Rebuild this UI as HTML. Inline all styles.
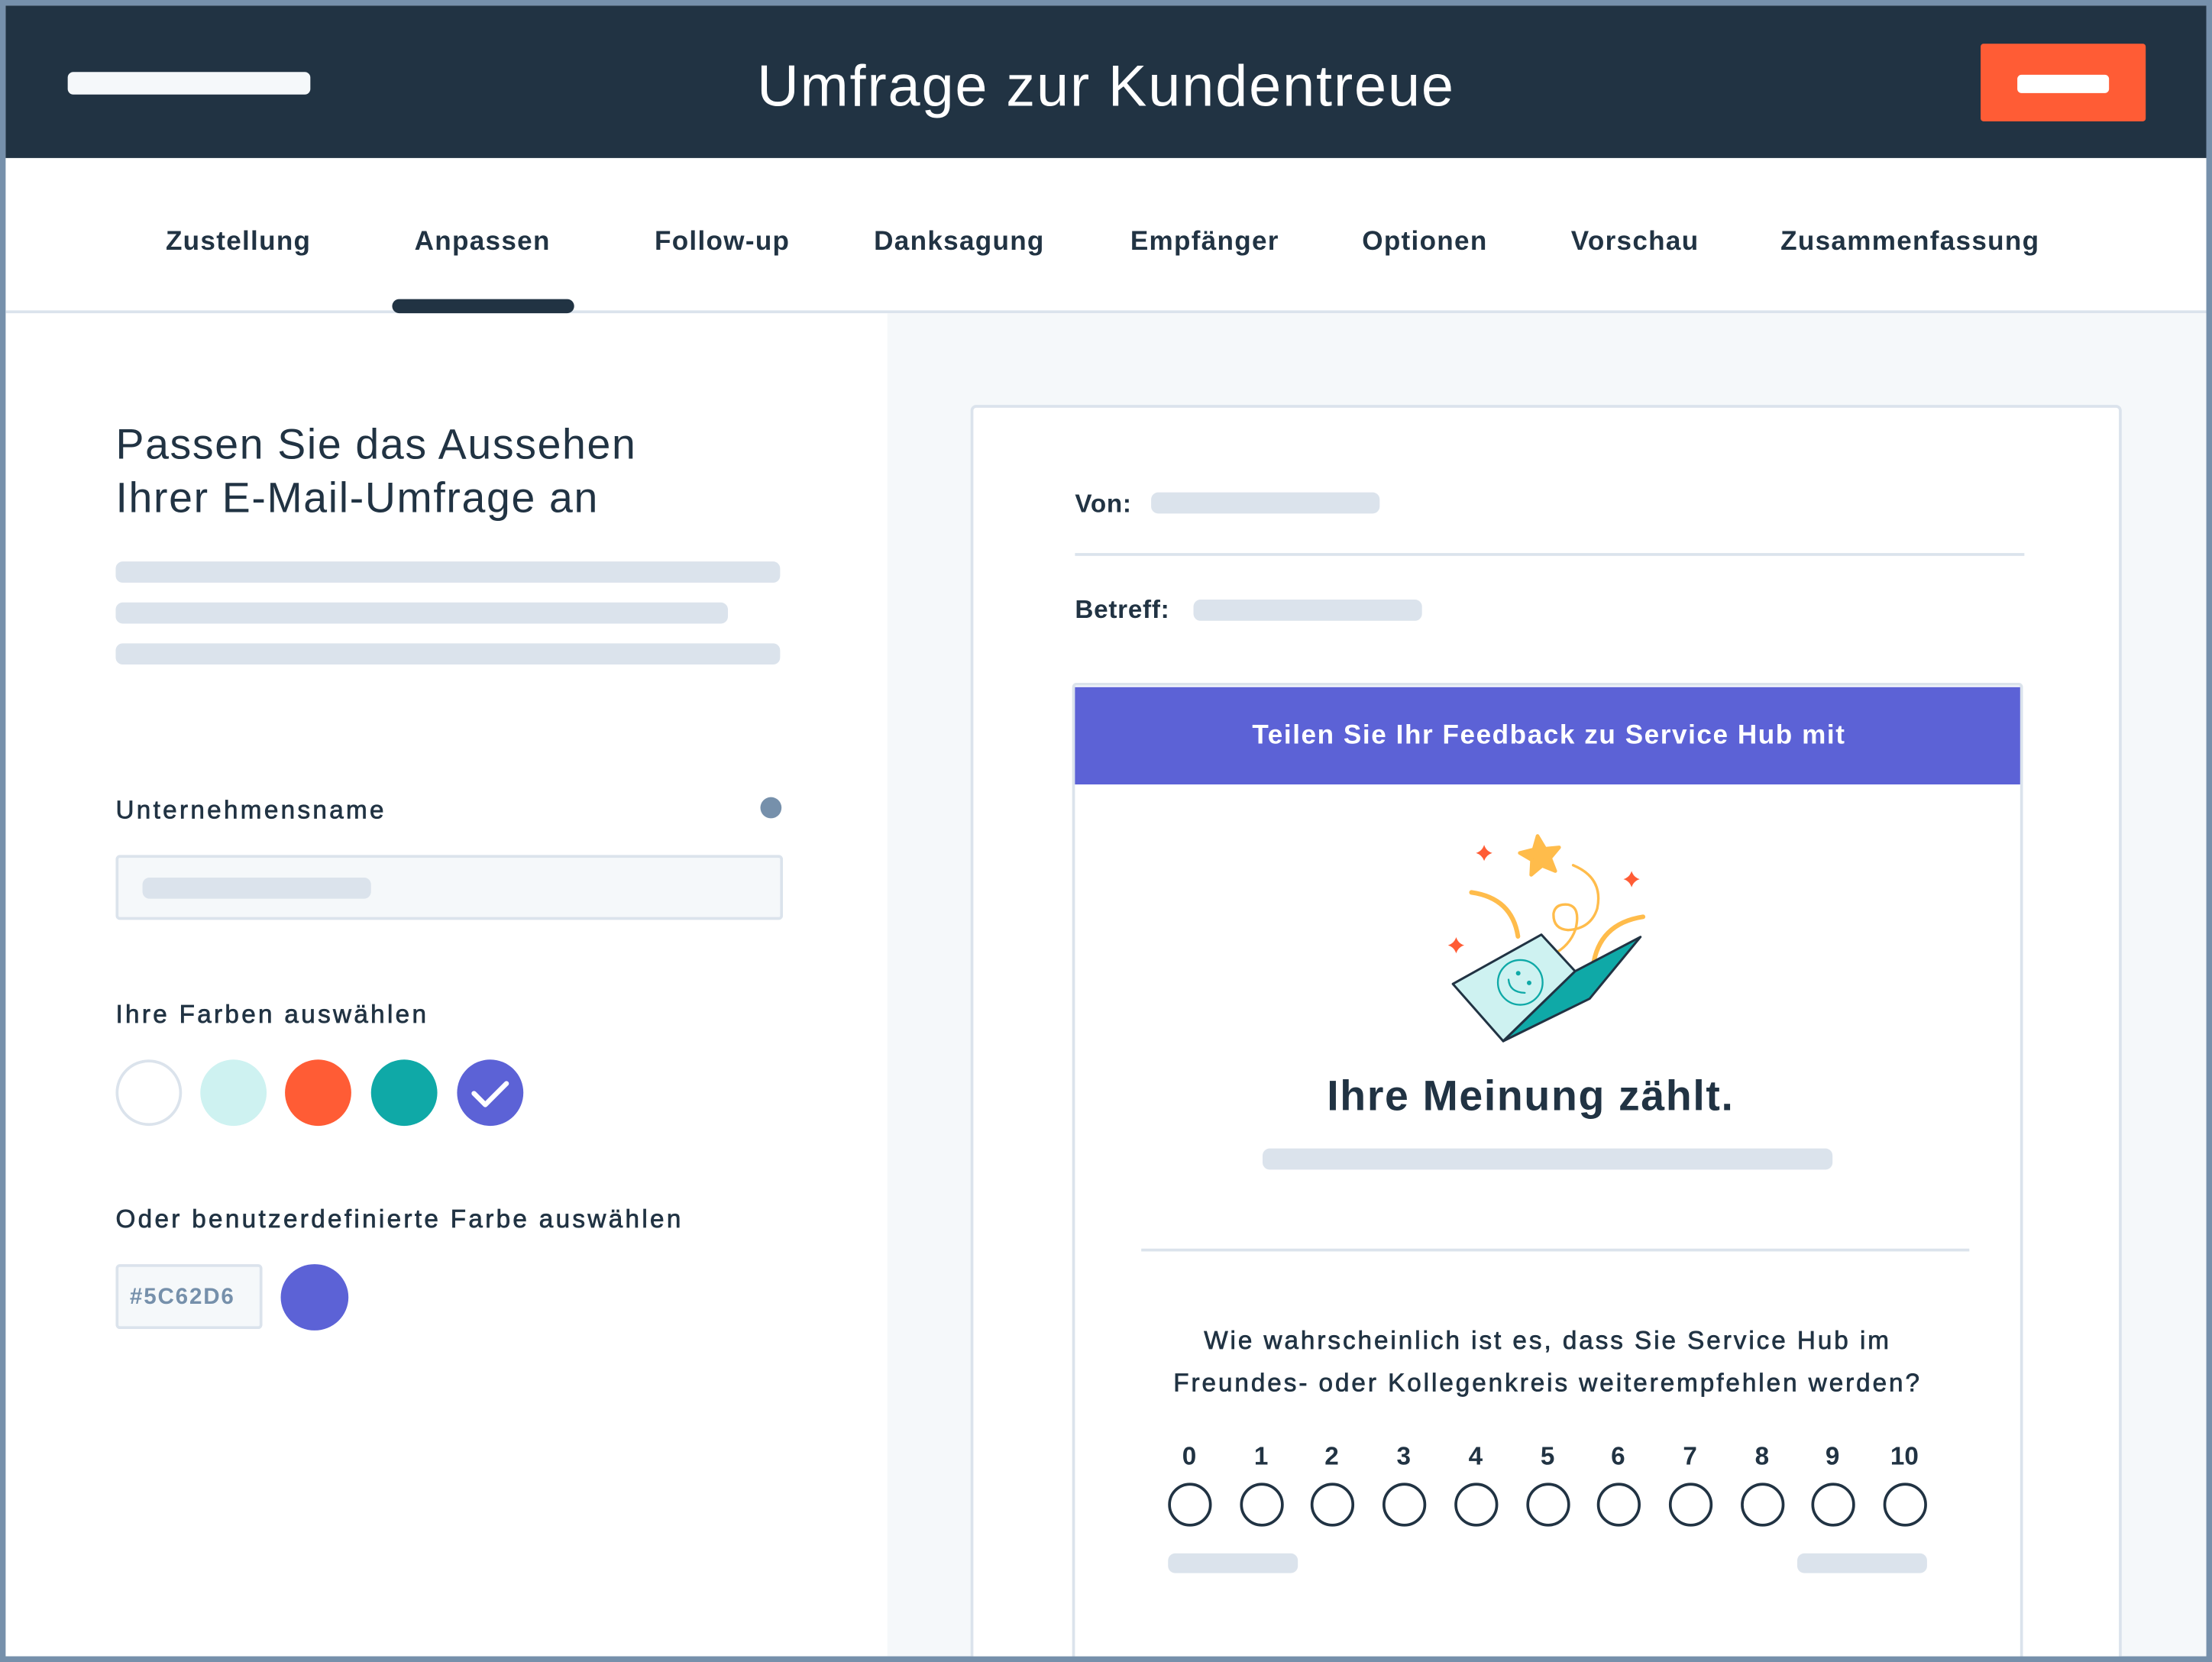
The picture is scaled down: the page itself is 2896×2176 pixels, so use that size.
<!DOCTYPE html>
<html><head><meta charset="utf-8">
<style>
*{margin:0;padding:0;box-sizing:border-box}
html,body{width:2896px;height:2176px;overflow:hidden;background:#7690ab}
#s{position:absolute;left:0;top:0;width:1568px;height:1178px;overflow:hidden;transform:scale(1.84694,1.84720);transform-origin:0 0;font-family:"Liberation Sans",sans-serif;color:#213343}
.a{position:absolute}
.bar{position:absolute;background:#dbe3ec;border-radius:5px}
.t{position:absolute;white-space:nowrap;font-weight:bold}
.c{transform:translateX(-50%)}
.lab{font-size:18px;font-weight:normal;-webkit-text-stroke:0.4px #213343;letter-spacing:1.8px}
.tab{font-size:19px;top:161px;letter-spacing:0.7px}
.circ{position:absolute;width:31px;height:31px;border:2.5px solid #213343;border-radius:50%}
.num{position:absolute;width:40px;text-align:center;font-size:18px;font-weight:bold;top:1022px}
</style></head><body><div id="s">
<div class="a" style="left:4px;top:4px;width:1560px;height:1170px;background:#fff"></div>
<!-- header -->
<div class="a" style="left:4px;top:4px;width:1560px;height:108px;background:#213343"></div>
<div class="bar" style="left:48px;top:51px;width:172px;height:16px;background:#f5f8fa;border-radius:4px"></div>
<div class="t c" style="left:784px;top:38px;font-size:41px;font-weight:normal;color:#fff;letter-spacing:1px">Umfrage zur Kundentreue</div>
<div class="a" style="left:1404px;top:31px;width:117px;height:55px;background:#ff5c35;border-radius:2px"></div>
<div class="bar" style="left:1430px;top:53px;width:65px;height:13px;background:#fff;border-radius:3px"></div>
<!-- tabs -->
<div class="a" style="left:4px;top:220px;width:1560px;height:2px;background:#dbe3ec"></div>
<div class="t c tab" style="left:169px">Zustellung</div>
<div class="t c tab" style="left:342px">Anpassen</div>
<div class="t c tab" style="left:512px">Follow-up</div>
<div class="t c tab" style="left:680px">Danksagung</div>
<div class="t c tab" style="left:854px">Empfänger</div>
<div class="t c tab" style="left:1010px">Optionen</div>
<div class="t c tab" style="left:1159px">Vorschau</div>
<div class="t c tab" style="left:1354px">Zusammenfassung</div>
<div class="a" style="left:278px;top:212px;width:129px;height:10px;background:#213343;border-radius:5px"></div>
<!-- left -->
<div class="t" style="left:82px;top:297px;font-size:30px;font-weight:normal;line-height:38px;letter-spacing:0.9px">Passen Sie das Aussehen<br>Ihrer E-Mail-Umfrage an</div>
<div class="bar" style="left:82px;top:398px;width:471px;height:15px"></div>
<div class="bar" style="left:82px;top:427px;width:434px;height:15px"></div>
<div class="bar" style="left:82px;top:456px;width:471px;height:15px"></div>
<div class="t lab" style="left:82px;top:564px">Unternehmensname</div>
<div class="a" style="left:539px;top:565px;width:15px;height:15px;border-radius:50%;background:#7690ab"></div>
<div class="a" style="left:82px;top:606px;width:473px;height:46px;background:#f5f8fa;border:2px solid #dbe3ec;border-radius:3px"></div>
<div class="bar" style="left:101px;top:622px;width:162px;height:15px"></div>
<div class="t lab" style="left:82px;top:709px">Ihre Farben auswählen</div>
<div class="a" style="left:82px;top:751px;width:47px;height:47px;border-radius:50%;border:2px solid #dbe3ec"></div>
<div class="a" style="left:142px;top:751px;width:47px;height:47px;border-radius:50%;background:#cef2f1"></div>
<div class="a" style="left:202px;top:751px;width:47px;height:47px;border-radius:50%;background:#ff5c35"></div>
<div class="a" style="left:263px;top:751px;width:47px;height:47px;border-radius:50%;background:#0fa9a7"></div>
<div class="a" style="left:324px;top:751px;width:47px;height:47px;border-radius:50%;background:#5c62d6"></div>
<svg class="a" style="left:324px;top:751px" width="47" height="47"><path d="M12 24 L20 32 L35 17" fill="none" stroke="#fff" stroke-width="3.5" stroke-linecap="round" stroke-linejoin="round"/></svg>
<div class="t lab" style="left:82px;top:854px">Oder benutzerdefinierte Farbe auswählen</div>
<div class="a" style="left:82px;top:896px;width:104px;height:46px;background:#f5f8fa;border:2px solid #dbe3ec;border-radius:3px"></div>
<div class="t" style="left:92px;top:911px;font-size:16px;color:#7690ab;letter-spacing:1px">#5C62D6</div>
<div class="a" style="left:199px;top:896px;width:48px;height:47px;border-radius:50%;background:#5c62d6"></div>
<!-- right -->
<div class="a" style="left:629px;top:222px;width:935px;height:952px;background:#f5f8fa"></div>
<div class="a" style="left:688px;top:287px;width:816px;height:900px;background:#fff;border:2px solid #dbe3ec;border-radius:4px"></div>
<div class="t" style="left:762px;top:347px;font-size:18px;letter-spacing:0.4px">Von:</div>
<div class="bar" style="left:816px;top:349px;width:162px;height:15px"></div>
<div class="a" style="left:762px;top:392px;width:673px;height:2px;background:#dbe3ec"></div>
<div class="t" style="left:762px;top:422px;font-size:18px;letter-spacing:0.4px">Betreff:</div>
<div class="bar" style="left:846px;top:425px;width:162px;height:15px"></div>
<div class="a" style="left:760px;top:484px;width:674px;height:720px;border:2px solid #dbe3ec;border-radius:3px;background:#fff"></div>
<div class="a" style="left:762px;top:487px;width:670px;height:69px;background:#5c62d6"></div>
<div class="t c" style="left:1098px;top:511px;font-size:19px;color:#fff;letter-spacing:0.85px">Teilen Sie Ihr Feedback zu Service Hub mit</div>
<svg class="a" style="left:1007px;top:579px" width="173" height="173" viewBox="0 0 960 960">
<g fill="#ff5c35">
<path d="M250 110 Q258 135 282 142 Q258 150 250 173 Q242 150 218 142 Q242 135 250 110Z"/>
<path d="M830 213 Q838 238 862 245 Q838 252 830 277 Q822 252 798 245 Q822 238 830 213Z"/>
<path d="M140 473 Q148 498 172 505 Q148 512 140 537 Q132 512 108 505 Q132 498 140 473Z"/>
</g>
<path d="M460 75 L490 125 L545 120 L510 162 L530 213 L478 192 L435 228 L438 170 L390 142 L445 128Z" fill="#ffbc4b" stroke="#ffbc4b" stroke-width="14" stroke-linejoin="round"/>
<g fill="none" stroke="#ffbc4b" stroke-linecap="round">
<path d="M200 297 Q360 320 383 470" stroke-width="18"/>
<path d="M600 190 Q720 240 695 360 Q670 440 580 445 Q520 440 523 380 Q530 340 580 345 Q630 355 610 440 Q580 530 470 560" stroke-width="10"/>
<path d="M875 393 Q700 420 678 590" stroke-width="18"/>
</g>
<path d="M127 657 L475 463 L608 607 L325 882Z" fill="#cef2f1" stroke="#213343" stroke-width="9" stroke-linejoin="round"/>
<path d="M608 607 L865 472 L665 715 L325 882Z" fill="#0fa9a7" stroke="#213343" stroke-width="9" stroke-linejoin="round"/>
<circle cx="392" cy="651" r="88" fill="none" stroke="#0fa9a7" stroke-width="7"/>
<circle cx="384" cy="615" r="9" fill="#0fa9a7"/><circle cx="427" cy="653" r="9" fill="#0fa9a7"/>
<path d="M346 640 Q350 690 410 692" fill="none" stroke="#0fa9a7" stroke-width="7" stroke-linecap="round"/>
</svg>
<div class="t c" style="left:1085px;top:761px;font-size:30px;letter-spacing:0.9px">Ihre Meinung zählt.</div>
<div class="bar" style="left:895px;top:814px;width:404px;height:15px"></div>
<div class="a" style="left:809px;top:885px;width:587px;height:2px;background:#dbe3ec"></div>
<div class="t c" style="left:1097px;top:935px;font-size:18px;font-weight:normal;-webkit-text-stroke:0.4px #213343;letter-spacing:1.6px;line-height:30px;text-align:center">Wie wahrscheinlich ist es, dass Sie Service Hub im<br>Freundes- oder Kollegenkreis weiterempfehlen werden?</div>
<div class="num" style="left:823px">0</div><div class="num" style="left:874px">1</div><div class="num" style="left:924px">2</div><div class="num" style="left:975px">3</div><div class="num" style="left:1026px">4</div><div class="num" style="left:1077px">5</div><div class="num" style="left:1127px">6</div><div class="num" style="left:1178px">7</div><div class="num" style="left:1229px">8</div><div class="num" style="left:1279px">9</div><div class="num" style="left:1330px">10</div>
<div class="circ" style="left:828px;top:1051px"></div><div class="circ" style="left:879px;top:1051px"></div><div class="circ" style="left:929px;top:1051px"></div><div class="circ" style="left:980px;top:1051px"></div><div class="circ" style="left:1031px;top:1051px"></div><div class="circ" style="left:1082px;top:1051px"></div><div class="circ" style="left:1132px;top:1051px"></div><div class="circ" style="left:1183px;top:1051px"></div><div class="circ" style="left:1234px;top:1051px"></div><div class="circ" style="left:1284px;top:1051px"></div><div class="circ" style="left:1335px;top:1051px"></div>
<div class="bar" style="left:828px;top:1101px;width:92px;height:14px"></div>
<div class="bar" style="left:1274px;top:1101px;width:92px;height:14px"></div>
<!-- frame -->
<div class="a" style="left:0;top:1174px;width:1568px;height:10px;background:#7690ab"></div>
<div class="a" style="left:1564px;top:0;width:10px;height:1178px;background:#7690ab"></div>
</div></body></html>
